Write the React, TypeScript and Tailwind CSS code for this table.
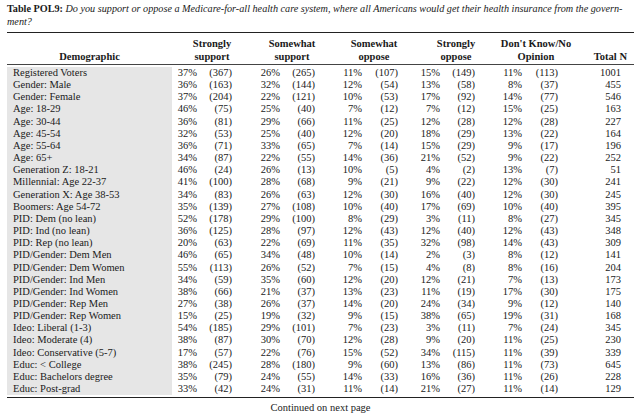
import React from 'react';

// [label, ss%, ss n, sws%, sws n, swo%, swo n, so%, so n, dk%, dk n, total]
const rows: [string, ...string[]][] = [
  ['Registered Voters', '37%', '(367)', '26%', '(265)', '11%', '(107)', '15%', '(149)', '11%', '(113)', '1001'],
  ['Gender: Male', '36%', '(163)', '32%', '(144)', '12%', '(54)', '13%', '(58)', '8%', '(37)', '455'],
  ['Gender: Female', '37%', '(204)', '22%', '(121)', '10%', '(53)', '17%', '(92)', '14%', '(77)', '546'],
  ['Age: 18-29', '46%', '(75)', '25%', '(40)', '7%', '(12)', '7%', '(12)', '15%', '(25)', '163'],
  ['Age: 30-44', '36%', '(81)', '29%', '(66)', '11%', '(25)', '12%', '(28)', '12%', '(28)', '227'],
  ['Age: 45-54', '32%', '(53)', '25%', '(40)', '12%', '(20)', '18%', '(29)', '13%', '(22)', '164'],
  ['Age: 55-64', '36%', '(71)', '33%', '(65)', '7%', '(14)', '15%', '(29)', '9%', '(17)', '196'],
  ['Age: 65+', '34%', '(87)', '22%', '(55)', '14%', '(36)', '21%', '(52)', '9%', '(22)', '252'],
  ['Generation Z: 18-21', '46%', '(24)', '26%', '(13)', '10%', '(5)', '4%', '(2)', '13%', '(7)', '51'],
  ['Millennial: Age 22-37', '41%', '(100)', '28%', '(68)', '9%', '(21)', '9%', '(22)', '12%', '(30)', '241'],
  ['Generation X: Age 38-53', '34%', '(83)', '26%', '(63)', '12%', '(30)', '16%', '(40)', '12%', '(30)', '245'],
  ['Boomers: Age 54-72', '35%', '(139)', '27%', '(108)', '10%', '(40)', '17%', '(69)', '10%', '(40)', '395'],
  ['PID: Dem (no lean)', '52%', '(178)', '29%', '(100)', '8%', '(29)', '3%', '(11)', '8%', '(27)', '345'],
  ['PID: Ind (no lean)', '36%', '(125)', '28%', '(97)', '12%', '(43)', '12%', '(40)', '12%', '(43)', '348'],
  ['PID: Rep (no lean)', '20%', '(63)', '22%', '(69)', '11%', '(35)', '32%', '(98)', '14%', '(43)', '309'],
  ['PID/Gender: Dem Men', '46%', '(65)', '34%', '(48)', '10%', '(14)', '2%', '(3)', '8%', '(12)', '141'],
  ['PID/Gender: Dem Women', '55%', '(113)', '26%', '(52)', '7%', '(15)', '4%', '(8)', '8%', '(16)', '204'],
  ['PID/Gender: Ind Men', '34%', '(59)', '35%', '(60)', '12%', '(20)', '12%', '(21)', '7%', '(13)', '173'],
  ['PID/Gender: Ind Women', '38%', '(66)', '21%', '(37)', '13%', '(23)', '11%', '(19)', '17%', '(30)', '175'],
  ['PID/Gender: Rep Men', '27%', '(38)', '26%', '(37)', '14%', '(20)', '24%', '(34)', '9%', '(12)', '140'],
  ['PID/Gender: Rep Women', '15%', '(25)', '19%', '(32)', '9%', '(15)', '38%', '(65)', '19%', '(31)', '168'],
  ['Ideo: Liberal (1-3)', '54%', '(185)', '29%', '(101)', '7%', '(23)', '3%', '(11)', '7%', '(24)', '345'],
  ['Ideo: Moderate (4)', '38%', '(87)', '30%', '(70)', '12%', '(28)', '9%', '(20)', '11%', '(25)', '230'],
  ['Ideo: Conservative (5-7)', '17%', '(57)', '22%', '(76)', '15%', '(52)', '34%', '(115)', '11%', '(39)', '339'],
  ['Educ: < College', '38%', '(245)', '28%', '(180)', '9%', '(60)', '13%', '(86)', '11%', '(73)', '645'],
  ['Educ: Bachelors degree', '35%', '(79)', '24%', '(55)', '14%', '(33)', '16%', '(36)', '11%', '(26)', '228'],
  ['Educ: Post-grad', '33%', '(42)', '24%', '(31)', '11%', '(14)', '21%', '(27)', '11%', '(14)', '129'],
];

// widths of the value cells, right aligned
const cellW = ['w-[25px]', 'w-[35px]', 'w-[48px]', 'w-[35px]', 'w-[47px]', 'w-[36px]', 'w-[42px]', 'w-[35px]', 'w-[47px]', 'w-[36px]', 'w-[63px]'];

const headers = [
  { w: 'w-[80px]', lines: ['Strongly', 'support'] },
  { w: 'w-[80px]', lines: ['Somewhat', 'support'] },
  { w: 'w-[84px]', lines: ['Somewhat', 'oppose'] },
  { w: 'w-[80px]', lines: ['Strongly', 'oppose'] },
  { w: 'w-[80px]', lines: ["Don't Know/No", 'Opinion'] },
];

export default function App() {
  return (
    <div className="w-[639px] h-[419px] bg-white text-[#1a1a1a] font-['Liberation_Serif',serif] overflow-hidden">
      <div className="pl-[7px] pt-[2px] text-[10.2px] leading-[13px] whitespace-nowrap">
        <span className="font-bold">Table POL9:</span>{' '}
        <span className="italic">
          Do you support or oppose a Medicare-for-all health care system, where all Americans would get their health insurance from the govern-
        </span>
        <br />
        <span className="italic">ment?</span>
      </div>

      <div className="ml-[7px] w-[627px] mt-[4px]">
        <div className="border-t-[1.5px] border-[#222]" />

        {/* header */}
        <div className="flex items-end h-[31px] pb-[1px] text-[10.5px] leading-[13px] font-bold">
          <div className="w-[165px] text-center">Demographic</div>
          {headers.map((h) => (
            <div key={h.lines[0] + h.lines[1]} className={`${h.w} text-center whitespace-nowrap`}>
              <div>{h.lines[0]}</div>
              <div>{h.lines[1]}</div>
            </div>
          ))}
          <div className="w-[58px] text-right pr-[7px] whitespace-nowrap">Total N</div>
        </div>

        <div className="border-t border-[#444]" />

        <div className="py-[2px] text-[10.5px] leading-[12.15px]">
          {rows.map(([label, ...vals]) => (
            <div key={label} className="flex">
              <div className="w-[165px] pl-[6px] bg-[#e6e6e6] whitespace-nowrap">{label}</div>
              {vals.map((v, i) => (
                <div key={i} className={`${cellW[i]} text-right`}>
                  {v}
                </div>
              ))}
            </div>
          ))}
        </div>

        <div className="border-t-[1.5px] border-[#222]" />

        <div className="text-center text-[10.5px] leading-[12px] pt-[4px]">Continued on next page</div>
      </div>
    </div>
  );
}
